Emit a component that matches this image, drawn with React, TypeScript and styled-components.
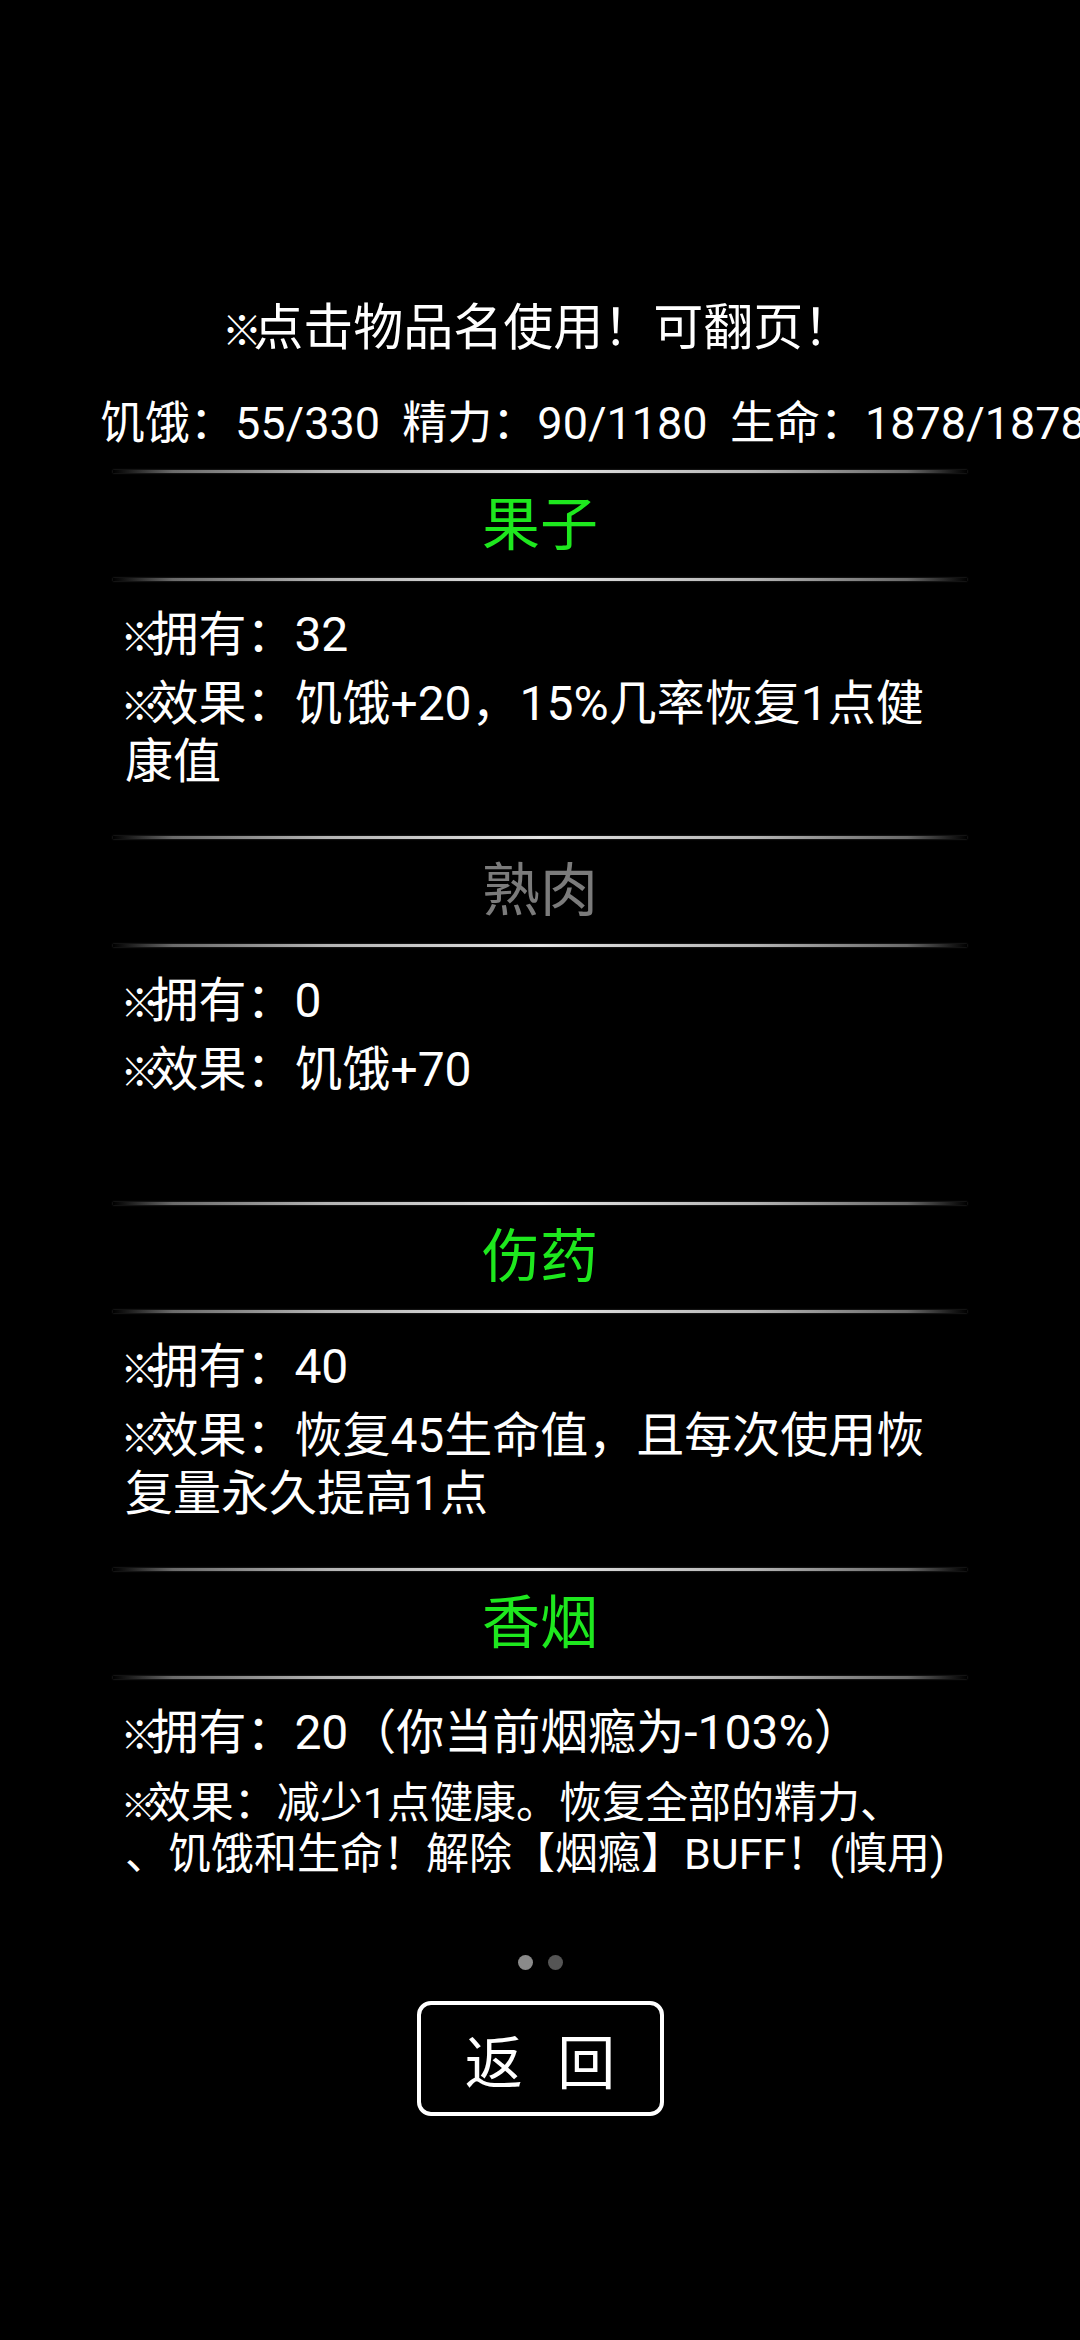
import { createGlobalStyle, styled } from "styled-components";

interface Item {
	name: string;
	active: boolean;
	owned: string;
	effect: React.ReactNode;
	small?: boolean;
}

const items: Item[] = [
	{ name: "果子", active: true, owned: "32", effect: "饥饿+20，15%几率恢复1点健康值" },
	{ name: "熟肉", active: false, owned: "0", effect: "饥饿+70" },
	{
		name: "伤药",
		active: true,
		owned: "40",
		effect: "恢复45生命值，且每次使用恢复量永久提高1点",
	},
	{
		name: "香烟",
		active: true,
		owned: "20（你当前烟瘾为-103%）",
		effect: (
			<>
				减少1点健康。恢复全部的精力、
				<br />
				、饥饿和生命！解除【烟瘾】BUFF！(慎用)
			</>
		),
		small: true,
	},
];

const App = () => {
	return (
		<>
			<GlobalStyle />
			<Screen>
				<Hint>
					<Mark>※</Mark>点击物品名使用！可翻页！
				</Hint>
				<Stats>{"饥饿：55/330  精力：90/1180  生命：1878/1878"}</Stats>
				<List>
					{items.map((el) => (
						<section key={el.name}>
							<Divider />
							<ItemTitle $active={el.active}>{el.name}</ItemTitle>
							<Divider />
							<Body>
								<Line>
									<Mark>※</Mark>拥有：{el.owned}
								</Line>
								<Effect $small={el.small}>
									<Mark>※</Mark>效果：{el.effect}
								</Effect>
							</Body>
						</section>
					))}
				</List>
				<Pager>
					<Dot $on />
					<Dot />
				</Pager>
				<BackButton>返 回</BackButton>
			</Screen>
		</>
	);
};

export default App;

const GlobalStyle = createGlobalStyle`
	html, body {
		margin: 0;
		padding: 0;
		background: #000;
	}
`;

const Screen = styled.div`
	width: 1080px;
	min-height: 2340px;
	box-sizing: border-box;
	padding-top: 297px;
	background: #000;
	color: #fff;
	font-family: Roboto, "Noto Sans CJK SC", sans-serif;
	display: flex;
	flex-direction: column;
	align-items: center;
	overflow: hidden;
`;

const Mark = styled.span`
	display: inline-block;
	font-size: 0.8em;
	line-height: 1;
	margin: 0 -0.22em 0 -0.12em;
`;

const Hint = styled.div`
	font-size: 50px;
	line-height: 62px;
	text-align: center;
`;

const Stats = styled.div`
	align-self: stretch;
	margin-top: 37px;
	padding-left: 100px;
	font-size: 45px;
	line-height: 56px;
	white-space: pre;
	overflow: hidden;
`;

const List = styled.div`
	width: 854px;
	margin-top: 18px;
	display: flex;
	flex-direction: column;
`;

const Divider = styled.div`
	height: 3px;
	background: linear-gradient(
		to right,
		rgba(120, 120, 120, 0) 0%,
		#6a6a6a 7%,
		#b4b4b4 25%,
		#e4e4e4 50%,
		#b4b4b4 75%,
		#6a6a6a 93%,
		rgba(120, 120, 120, 0) 100%
	);
	box-shadow: 0 0 2px rgba(160, 160, 160, 0.45);
`;

const ItemTitle = styled.div<{ $active: boolean }>`
	height: 105px;
	box-sizing: border-box;
	padding-bottom: 12px;
	display: flex;
	align-items: center;
	justify-content: center;
	font-size: 58px;
	color: ${(props) => (props.$active ? "#1ee81e" : "#7b7b7b")};
`;

const Body = styled.div`
	height: 255px;
	box-sizing: border-box;
	padding: 24px 12px 0;
`;

const Line = styled.div`
	font-size: 48px;
	line-height: 60px;
`;

const Effect = styled.div<{ $small?: boolean }>`
	margin-top: ${(props) => (props.$small ? "15px" : "10px")};
	font-size: ${(props) => (props.$small ? "43px" : "48px")};
	line-height: ${(props) => (props.$small ? "51px" : "58px")};
`;

const Pager = styled.div`
	margin-top: 21px;
	display: flex;
	gap: 15px;
`;

const Dot = styled.span<{ $on?: boolean }>`
	width: 15px;
	height: 15px;
	border-radius: 50%;
	background: ${(props) => (props.$on ? "#8a8a8a" : "#555")};
`;

const BackButton = styled.button`
	margin-top: 31px;
	width: 247px;
	height: 115px;
	box-sizing: border-box;
	border: 4px solid #fff;
	border-radius: 14px;
	background: transparent;
	color: #fff;
	font-family: Roboto, "Noto Sans CJK SC", sans-serif;
	font-size: 58px;
	word-spacing: 20px;
	padding: 0;
`;
